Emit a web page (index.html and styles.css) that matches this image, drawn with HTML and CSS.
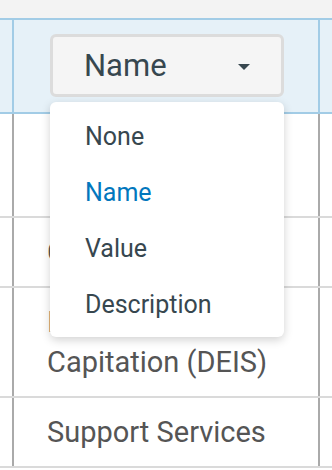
FILE: index.html
```html
<!DOCTYPE html>
<html lang="en">
<head>
  <meta charset="UTF-8">
  <meta name="viewport" content="width=device-width, initial-scale=1.0">
  <title>Sort by</title>
  <link rel="stylesheet" href="styles.css">
</head>
<body>
  <div class="sheet">
    <div class="row row_top"></div>
    <div class="row row_head">
      <div class="edge"></div>
      <div class="cell cell_head">
        <div class="picker">
          <a class="picker_btn" href="javascript:;">
            <span class="picker_label">Name</span>
            <span class="picker_caret"></span>
          </a>
          <ul class="picker_menu">
            <li class="picker_item">None</li>
            <li class="picker_item picker_item_on">Name</li>
            <li class="picker_item">Value</li>
            <li class="picker_item">Description</li>
          </ul>
        </div>
      </div>
      <div class="edge"></div>
    </div>
    <div class="row row_blank">
      <div class="edge"></div>
      <div class="cell"></div>
      <div class="edge"></div>
    </div>
    <div class="row">
      <div class="edge"></div>
      <div class="cell">Capitation</div>
      <div class="edge"></div>
    </div>
    <div class="row">
      <div class="edge"></div>
      <div class="cell">Increased<br>Capitation (DEIS)</div>
      <div class="edge"></div>
    </div>
    <div class="row">
      <div class="edge"></div>
      <div class="cell">Support Services</div>
      <div class="edge"></div>
    </div>
  </div>
</body>
</html>
```

FILE: styles.css
```css
body {
  margin: 0;
  background-color: #fff;
  font-family: Roboto, "Liberation Sans", sans-serif;
}
.sheet {
  width: 332px;
  height: 470px;
  overflow: hidden;
}
.row {
  display: flex;
  border-bottom: 2px solid #dadada;
}
.edge {
  width: 12px;
  flex-shrink: 0;
}
.cell {
  flex: 1;
  padding: 14px 33px;
  border-left: 2px solid #aaa;
  border-right: 2px solid #aaa;
  font-size: 29px;
  line-height: 40px;
  color: #555;
  white-space: nowrap;
}
.row_top {
  height: 18px;
  background-color: #f3f3f3;
  border-bottom: 2px solid #a2cce6;
}
.row_head {
  height: 92px;
  background-color: #e6f1f8;
  border-bottom: 2px solid #a2cce6;
}
.row_head .cell {
  border-color: #a2cce6;
}
.cell_head {
  padding: 0;
  display: flex;
  align-items: center;
  justify-content: center;
}
.row_blank .cell {
  height: 74px;
}

/* dropdown */
.picker {
  position: relative;
  width: 234px;
  margin-left: 2px;
  margin-top: -1px;
}
.picker_btn {
  display: flex;
  align-items: center;
  justify-content: space-between;
  box-sizing: border-box;
  height: 63px;
  padding: 0 31px 0 31px;
  border: 3px solid #dcdcdc;
  border-radius: 6px;
  background-color: #f5f5f5;
  color: #37474f;
  font-size: 31px;
  text-decoration: none;
}
.picker_caret {
  width: 0;
  height: 0;
  border-left: 6px solid transparent;
  border-right: 6px solid transparent;
  border-top: 6px solid #37474f;
  margin-top: 2px;
}
.picker_menu {
  position: absolute;
  top: 68px;
  left: 0;
  right: 0;
  margin: 0;
  padding: 7px 0 4px;
  list-style: none;
  background-color: #fff;
  border-radius: 6px;
  box-shadow: 0 3px 10px rgba(0, 0, 0, 0.18);
  z-index: 2;
}
.picker_item {
  height: 56px;
  line-height: 56px;
  padding: 0 35px;
  font-size: 25px;
  color: #37474f;
}
.picker_item_on {
  color: #0277bd;
}
```
